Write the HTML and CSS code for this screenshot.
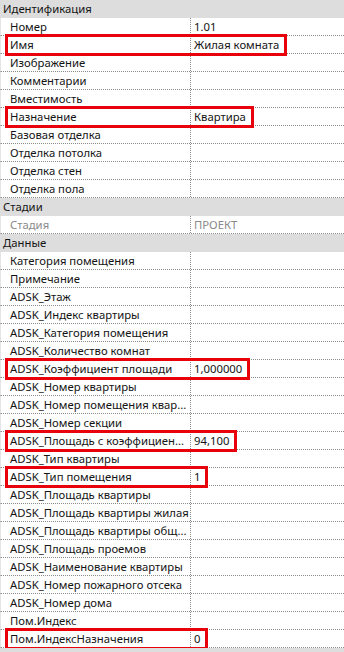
FILE: index.html
```html
<!DOCTYPE html>
<html lang="ru">
<head>
  <meta charset="UTF-8">
  <meta name="viewport" content="width=device-width, initial-scale=1.0">
  <title>Свойства помещения</title>
  <link rel="stylesheet" href="styles.css">
</head>
<body>
  <div class="props">
    <div class="group">Идентификация</div>
    <div class="row"><div class="name">Номер</div><div class="value"><span class="val">1.01</span></div></div>
    <div class="row"><div class="name">Имя</div><div class="value"><span class="val mark">Жилая комната</span></div></div>
    <div class="row"><div class="name">Изображение</div><div class="value"></div></div>
    <div class="row"><div class="name">Комментарии</div><div class="value"></div></div>
    <div class="row"><div class="name">Вместимость</div><div class="value"></div></div>
    <div class="row"><div class="name">Назначение</div><div class="value"><span class="val mark">Квартира</span></div></div>
    <div class="row"><div class="name">Базовая отделка</div><div class="value"></div></div>
    <div class="row"><div class="name">Отделка потолка</div><div class="value"></div></div>
    <div class="row"><div class="name">Отделка стен</div><div class="value"></div></div>
    <div class="row"><div class="name">Отделка пола</div><div class="value"></div></div>

    <div class="group">Стадии</div>
    <div class="row disabled"><div class="name">Стадия</div><div class="value"><span class="val">ПРОЕКТ</span></div></div>

    <div class="group">Данные</div>
    <div class="row"><div class="name">Категория помещения</div><div class="value"></div></div>
    <div class="row"><div class="name">Примечание</div><div class="value"></div></div>
    <div class="row"><div class="name">ADSK_Этаж</div><div class="value"></div></div>
    <div class="row"><div class="name">ADSK_Индекс квартиры</div><div class="value"></div></div>
    <div class="row"><div class="name">ADSK_Категория помещения</div><div class="value"></div></div>
    <div class="row"><div class="name">ADSK_Количество комнат</div><div class="value"></div></div>
    <div class="row"><div class="name">ADSK_Коэффициент площади</div><div class="value"><span class="val mark">1,000000</span></div></div>
    <div class="row"><div class="name">ADSK_Номер квартиры</div><div class="value"></div></div>
    <div class="row"><div class="name">ADSK_Номер помещения квар...</div><div class="value"></div></div>
    <div class="row"><div class="name">ADSK_Номер секции</div><div class="value"></div></div>
    <div class="row"><div class="name">ADSK_Площадь с коэффициен...</div><div class="value"><span class="val mark">94,100</span></div></div>
    <div class="row"><div class="name">ADSK_Тип квартиры</div><div class="value"></div></div>
    <div class="row"><div class="name">ADSK_Тип помещения</div><div class="value"><span class="val mark">1</span></div></div>
    <div class="row"><div class="name">ADSK_Площадь квартиры</div><div class="value"></div></div>
    <div class="row"><div class="name">ADSK_Площадь квартиры жилая</div><div class="value"></div></div>
    <div class="row"><div class="name">ADSK_Площадь квартиры общ...</div><div class="value"></div></div>
    <div class="row"><div class="name">ADSK_Площадь проемов</div><div class="value"></div></div>
    <div class="row"><div class="name">ADSK_Наименование квартиры</div><div class="value"></div></div>
    <div class="row"><div class="name">ADSK_Номер пожарного отсека</div><div class="value"></div></div>
    <div class="row"><div class="name">ADSK_Номер дома</div><div class="value"></div></div>
    <div class="row"><div class="name">Пом.Индекс</div><div class="value"></div></div>
    <div class="row"><div class="name">Пом.ИндексНазначения</div><div class="value"><span class="val mark">0</span></div></div>
  </div>
</body>
</html>
```

FILE: styles.css
```css
:root {
  --bg: #ffffff;
  --group-bg: #dddddd;
  --text: #141414;
  --text-disabled: #8a8a8a;
  --grid-line: #8c8c8c;
  --mark: #e8000b;

  --row-h: 17px;
  --name-w: 189px;
}

* {
  box-sizing: border-box;
  margin: 0;
  padding: 0;
}

body {
  width: 344px;
  font-family: 'Noto Sans', 'Segoe UI', sans-serif;
  font-size: 11.3px;
  color: var(--text);
  background-color: var(--group-bg);
}

.props {
  display: flex;
  flex-direction: column;
}

/* Category header rows */
.group {
  height: 18px;
  line-height: 18px;
  padding-left: 3px;
  background-color: var(--group-bg);
}

/* Parameter rows */
.row {
  display: grid;
  grid-template-columns: calc(var(--name-w) + 1px) 1fr;
  height: 18px;
  background-color: var(--bg);
  border-bottom: 1px dotted var(--grid-line);
  border-left: 1px solid #e4e4e4;
}

.name,
.value {
  height: var(--row-h);
  line-height: var(--row-h);
  white-space: nowrap;
}

.name {
  padding-left: 9px;
  overflow: hidden;
  border-right: 1px dotted var(--grid-line);
}

.value {
  padding-left: 3px;
}

.val {
  position: relative;
  display: inline-block;
  height: var(--row-h);
}

.row.disabled .name,
.row.disabled .value {
  color: var(--text-disabled);
}

/* Red callout box around a row and its value */
.val.mark::after {
  content: "";
  position: absolute;
  top: -2px;
  bottom: -3px;
  left: -189px;
  right: -8px;
  border: 3px solid var(--mark);
  z-index: 1;
}
```
